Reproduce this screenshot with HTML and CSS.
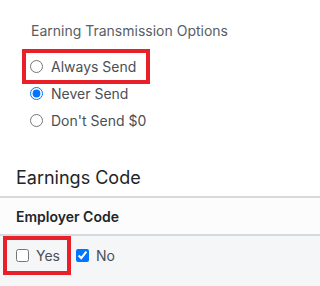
FILE: index.html
```html
<!DOCTYPE html>
<html lang="en">
<head>
<meta charset="utf-8">
<title>Earning Transmission Options</title>
<link rel="stylesheet" href="styles.css">
</head>
<body>
<div class="options">
  <div class="opt-title">Earning Transmission Options</div>
  <div class="radios">
    <label class="opt hl"><input type="radio" name="tx"><span>Always Send</span></label>
    <label class="opt"><input type="radio" name="tx" checked><span>Never Send</span></label>
    <label class="opt"><input type="radio" name="tx"><span>Don't Send $0</span></label>
  </div>
</div>
<section class="earn">
  <h2 class="earn-title">Earnings Code</h2>
  <div class="tbl">
    <div class="th">Employer Code</div>
    <div class="td">
      <label class="chk hl"><input type="checkbox"><span>Yes</span></label>
      <label class="chk chk-no"><input type="checkbox" checked><span>No</span></label>
    </div>
  </div>
</section>
</body>
</html>
```
FILE: styles.css
```css
html, body {
  margin: 0;
  padding: 0;
  background: #ffffff;
  font-family: Inter, "Noto Sans", sans-serif;
}
.options {
  padding-top: 21px;
}
.opt-title {
  padding-left: 31px;
  font-size: 14px;
  line-height: 20px;
  color: #585d63;
}
.radios {
  margin-top: 12px;
  padding-left: 26px;
  display: flex;
  flex-direction: column;
  align-items: flex-start;
}
.opt {
  display: flex;
  align-items: center;
  height: 27px;
  padding: 0 10px 0 4px;
  font-size: 14px;
  color: #4a4f55;
}
.opt input {
  margin: 0 8px 0 0;
  width: 13px;
  height: 13px;
}
.hl {
  outline: 4px solid #e8202a;
}
.earn {
  margin-top: 31px;
}
.earn-title {
  margin: 0 0 5px 0;
  padding-left: 16px;
  font-size: 18px;
  font-weight: 400;
  line-height: 26px;
  color: #212529;
}
.tbl {
  border-top: 2px solid #d6dadd;
}
.th {
  height: 36px;
  display: flex;
  align-items: center;
  padding-left: 16px;
  font-size: 14px;
  font-weight: 600;
  color: #212529;
  background: #fcfcfd;
  border-bottom: 2px solid #d6dadd;
}
.td {
  background: #f5f6f8;
  padding: 4px 0 20px 7px;
  display: flex;
  align-items: center;
}
.chk {
  display: flex;
  align-items: center;
  height: 31px;
  padding: 0 7px 0 9px;
  font-size: 14px;
  color: #4a4f55;
}
.chk input {
  margin: 0 7px 0 0;
  width: 13px;
  height: 13px;
}
.chk-no {
  margin-left: 0;
}
```
